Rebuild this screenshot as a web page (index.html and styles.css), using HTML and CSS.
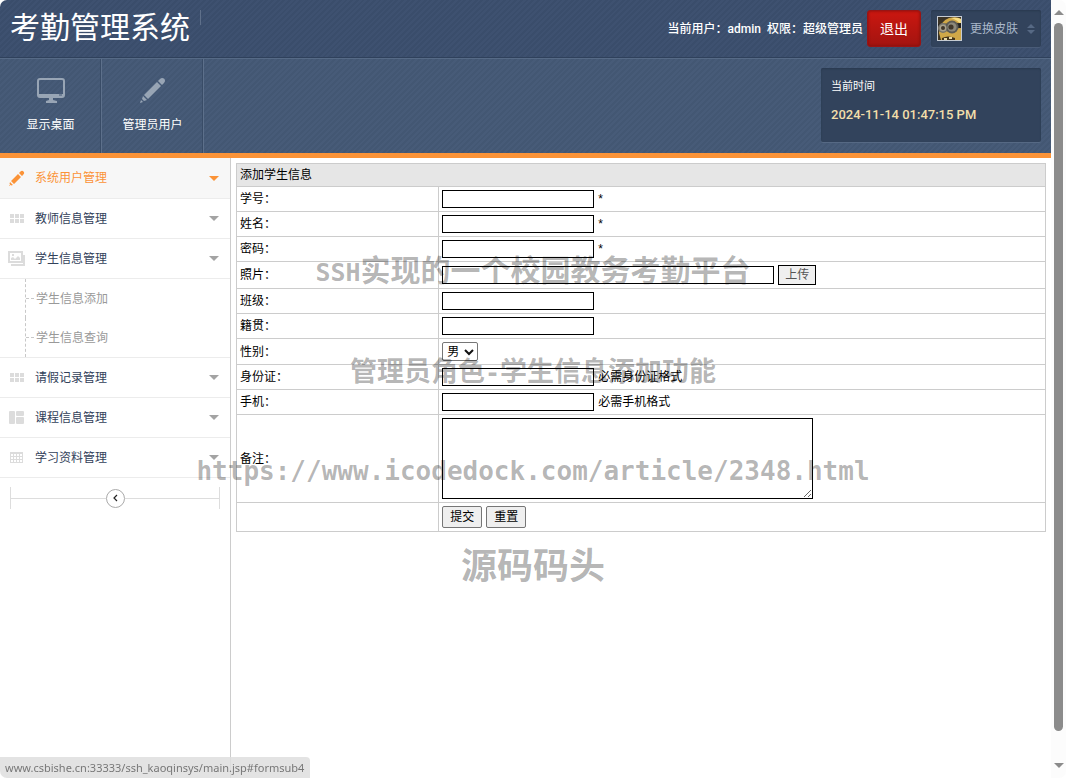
FILE: index.html
```html
<!DOCTYPE html>
<html lang="zh-CN">
<head>
<meta charset="utf-8">
<title>考勤管理系统</title>
<link rel="stylesheet" href="styles.css">
</head>
<body>
<div class="page">
  <header class="topbar">
    <h1 class="brand">考勤管理系统</h1>
    <span class="brand-rule"></span>
    <div class="user">
      <span class="user-info">当前用户：admin&nbsp; 权限：超级管理员</span>
      <button class="logout" type="button">退出</button>
      <button class="skin" type="button">
        <svg class="avatar" viewBox="0 0 25 25" width="25" height="25" aria-hidden="true">
          <rect width="25" height="25" fill="#c5cbd2"/>
          <rect x="1" y="1" width="23" height="23" fill="#3c3426"/>
          <path d="M2 17Q3 5 12 2Q20 0 24 3V24H4Z" fill="#d0a848"/>
          <path d="M14 2Q20 1 24 3V9Q21 4 14 2Z" fill="#f6dc84"/>
          <path d="M1 8L24 7V12L1 13Z" fill="#25231f"/>
          <circle cx="6" cy="12" r="5" fill="#77746b"/>
          <circle cx="15" cy="11" r="6.500" fill="#5d5b54"/>
          <circle cx="6" cy="12" r="3.500" fill="#a9a18c"/>
          <circle cx="15" cy="11" r="4.600" fill="#8d897b"/>
          <circle cx="6" cy="12" r="2" fill="#40372a"/>
          <circle cx="14" cy="11" r="2.600" fill="#40372a"/>
          <path d="M5 22Q11 19 18 22V24H5Z" fill="#43341b"/>
          <path d="M7 22h3v2H7zM12 21h3v2h-3z" fill="#e9d9a4"/>
        </svg>
        <span>更换皮肤</span>
        <svg class="sorter" viewBox="0 0 8 12" width="8" height="12" aria-hidden="true"><path d="M0 5L4 1L8 5ZM0 7H8L4 11Z" fill="#566984"/></svg>
      </button>
    </div>
  </header>

  <nav class="toolbar">
    <a class="tile" href="#desktop">
      <svg viewBox="0 0 28 28" width="28" height="28" aria-hidden="true">
        <path d="M3 2H25Q27 2 27 4V18Q27 20 25 20H3Q1 20 1 18V4Q1 2 3 2Z" fill="none" stroke="#98a5b5" stroke-width="2"/>
        <path d="M2 17H26V19H2Z" fill="#98a5b5"/><path d="M22 17.500h3v1h-3z" fill="#455975"/>
        <path d="M12 20H16V23L20 24V26H9V24L12 23Z" fill="#98a5b5"/>
      </svg>
      <span>显示桌面</span>
    </a>
    <a class="tile" href="#admins">
      <svg viewBox="0 0 28 28" width="28" height="28" aria-hidden="true">
        <g fill="#98a5b5"><path d="M18 5L22 9L9 22L5 18Z"/><path d="M19 4L21 2Q23 0 25.500 2Q27 4 25 6L23 8Z"/><path d="M4 19L8 23L5 24L3 22Z"/><path d="M2 23L4 25L1 26Z"/></g>
      </svg>
      <span>管理员用户</span>
    </a>
    <section class="clock">
      <span class="clock-label">当前时间</span>
      <time class="clock-time" datetime="2024-11-14T13:47:15">2024-11-14 01:47:15 PM</time>
    </section>
  </nav>

  <div class="content">
    <aside class="sidebar">
      <a class="menu active" href="#users">
        <svg viewBox="0 0 17 17" width="17" height="17" aria-hidden="true"><path d="M10 4L13 7L6 14L3 11ZM11 3L12 2Q14 0 15.500 1.500Q17 3 15 5L14 6ZM2 12L5 15L3 15.500L1.500 14ZM1 15L2 16H1Z"/></svg>
        <span>系统用户管理</span><i class="caret"></i>
      </a>
      <a class="menu" href="#teachers">
        <svg viewBox="0 0 17 17" width="17" height="17" aria-hidden="true"><path d="M2 4h4v4H2zM7 4h4v4H7zM12 4h4v4h-4zM2 9h4v4H2zM7 9h4v4H7zM12 9h4v4h-4z"/></svg>
        <span>教师信息管理</span><i class="caret"></i>
      </a>
      <a class="menu" href="#students">
        <svg viewBox="0 0 17 17" width="17" height="17" aria-hidden="true"><path d="M1 2h13v10H1zM16 5v10H3" fill="none" stroke="#dcdcdc" stroke-width="2"/><path d="M3 10V8L5 7L7 9L10 6L12 8V10ZM4 4h2v2H4z"/></svg>
        <span>学生信息管理</span><i class="caret"></i>
      </a>
      <div class="submenu">
        <a class="subitem" href="#formsub4">学生信息添加</a>
        <a class="subitem" href="#formsub5">学生信息查询</a>
      </div>
      <a class="menu" href="#leave">
        <svg viewBox="0 0 17 17" width="17" height="17" aria-hidden="true"><path d="M2 4h4v4H2zM7 4h4v4H7zM12 4h4v4h-4zM2 9h4v4H2zM7 9h4v4H7zM12 9h4v4h-4z"/></svg>
        <span>请假记录管理</span><i class="caret"></i>
      </a>
      <a class="menu" href="#courses">
        <svg viewBox="0 0 17 17" width="17" height="17" aria-hidden="true"><rect x="1" y="2" width="6" height="13" rx="1"/><rect x="8" y="2" width="8" height="5" rx="1"/><rect x="8" y="8" width="8" height="7" rx="1"/></svg>
        <span>课程信息管理</span><i class="caret"></i>
      </a>
      <a class="menu" href="#materials">
        <svg viewBox="0 0 17 17" width="17" height="17" aria-hidden="true"><path d="M2 3h13v11H2z"/><path d="M3 5h2v2H3zM6 5h2v2H6zM9 5h2v2H9zM12 5h2v2h-2zM3 8h2v2H3zM6 8h2v2H6zM9 8h2v2H9zM12 8h2v2h-2zM3 11h2v2H3zM6 11h2v2H6zM9 11h2v2H9zM12 11h2v2h-2z" fill="#fff"/></svg>
        <span>学习资料管理</span><i class="caret"></i>
      </a>
      <div class="collapse">
        <span class="track"></span>
        <button class="collapse-button" type="button" aria-label="收起菜单"><svg viewBox="0 0 8 10" width="8" height="10" aria-hidden="true"><path d="M6 2L3 5L6 8" fill="none" stroke="#222" stroke-width="1.200"/></svg></button>
        <span class="track"></span>
      </div>
    </aside>

    <main class="main">
      <form>
        <table class="form-table">
          <colgroup><col class="label-column"><col></colgroup>
          <thead><tr><th colspan="2">添加学生信息</th></tr></thead>
          <tbody>
            <tr><td><label for="number">学号：</label></td><td><div class="field"><input id="number" type="text"><span>*</span></div></td></tr>
            <tr><td><label for="name">姓名：</label></td><td><div class="field"><input id="name" type="text"><span>*</span></div></td></tr>
            <tr><td><label for="password">密码：</label></td><td><div class="field"><input id="password" type="password"><span>*</span></div></td></tr>
            <tr><td><label for="photo">照片：</label></td><td><div class="field"><input id="photo" class="wide" type="text"><button class="upload" type="button">上传</button></div></td></tr>
            <tr><td><label for="class">班级：</label></td><td><div class="field"><input id="class" type="text"></div></td></tr>
            <tr><td><label for="origin">籍贯：</label></td><td><div class="field"><input id="origin" type="text"></div></td></tr>
            <tr><td><label for="gender">性别：</label></td><td><div class="field"><span class="select-box"><select id="gender"><option>男</option><option>女</option></select><svg class="chevron" viewBox="0 0 10 8" width="10" height="8" aria-hidden="true"><path d="M1 2L5 6L9 2" fill="none" stroke="#111" stroke-width="2"/></svg></span></div></td></tr>
            <tr><td><label for="idcard">身份证：</label></td><td><div class="field"><input id="idcard" type="text"><span>必需身份证格式</span></div></td></tr>
            <tr><td><label for="phone">手机：</label></td><td><div class="field"><input id="phone" type="text"><span>必需手机格式</span></div></td></tr>
            <tr><td><label for="remark">备注：</label></td><td><div class="field"><textarea id="remark"></textarea></div></td></tr>
            <tr><td></td><td><div class="field"><button class="action" type="submit">提交</button><button class="action" type="reset">重置</button></div></td></tr>
          </tbody>
        </table>
      </form>
    </main>
  </div>
</div>

<div class="scrollbar" aria-hidden="true">
  <i class="scroll-up"></i><span class="thumb"></span><i class="scroll-down"></i>
</div>

<div class="watermarks">
  <p class="mark mark-title"><span class="latin">SSH</span>实现的一个校园教务考勤平台</p>
  <p class="mark mark-role">管理员角色<span class="latin">-</span>学生信息添加功能</p>
  <p class="mark mark-url">https://www.icodedock.com/article/2348.html</p>
  <p class="mark mark-source">源码码头</p>
</div>
<div class="status">www.csbishe.cn:33333/ssh_kaoqinsys/main.jsp#formsub4</div>
</body>
</html>
```
FILE: styles.css
```css
* { box-sizing: border-box; }

body {
  margin: 0;
  min-height: 100vh;
  display: flex;
  background: #fff;
  color: #000;
  font: 12px/16px "Liberation Sans", "Noto Sans CJK SC", sans-serif;
}

a { color: inherit; text-decoration: none; }
button, input, select, textarea { font: inherit; margin: 0; }

.page { flex: 1; min-width: 0; display: flex; flex-direction: column; }

.topbar {
  height: 58px;
  padding: 10px;
  display: flex;
  align-items: flex-start;
  gap: 10px;
  color: #fff;
  background: repeating-linear-gradient(135deg, #3a4d6b 0 2px, #3e5170 2px 4px);
  border-bottom: 1px solid #2f415c;
  border-top-left-radius: 7px;
}
.brand { margin: 0; font-size: 30px; line-height: 36px; font-weight: 400; }
.brand-rule { width: 1px; height: 15px; background: #5f708a; }
.user { margin-left: auto; display: flex; align-items: center; font-family: Roboto, "Noto Sans CJK SC", sans-serif; }
.user-info { font-weight: 500; white-space: nowrap; }
.logout {
  width: 54px;
  height: 37px;
  margin: 0 10px 0 4px;
  padding: 0;
  border: 1px solid #991414;
  border-radius: 3px;
  background: linear-gradient(#cb1710, #a31410);
  box-shadow: inset 0 0 3px #7d100c;
  color: #fff;
  font-size: 14px;
}
.skin {
  width: 110px;
  height: 37px;
  padding: 0 6px;
  display: flex;
  align-items: center;
  gap: 8px;
  border: 0;
  border-radius: 2px;
  background: #32435c;
  box-shadow: inset 0 1px 2px #29394f, 0 1px 0 #4a5c78;
  color: #a9b7c9;
}
.sorter { margin-left: auto; }

.toolbar {
  height: 100px;
  display: flex;
  align-items: flex-start;
  color: #fff;
  background: repeating-linear-gradient(135deg, #435773 0 2px, #475b78 2px 4px);
  border-top: 1px solid #566a86;
  border-bottom: 5px solid #fb9337;
}
.tile {
  width: 102px;
  height: 94px;
  padding-top: 18px;
  display: flex;
  flex-direction: column;
  align-items: center;
  gap: 12px;
  border-right: 1px solid #5d708b;
  box-shadow: inset -1px 0 0 #394c67;
}
.clock {
  width: 220px;
  height: 74px;
  margin: 9px 10px 0 auto;
  padding: 10px;
  display: flex;
  flex-direction: column;
  gap: 13px;
  border-radius: 2px;
  background: #32435c;
  box-shadow: inset 0 1px 2px #29394f, 0 1px 0 #566984;
}
.clock-label { font-size: 11px; }
.clock-time { color: #f2dfaa; font: 500 13px/16px Roboto, sans-serif; }

.content { flex: 1; display: flex; }
.sidebar { width: 231px; flex: none; border-right: 1px solid #ccc; }
.menu {
  height: 40px;
  padding: 0 11px 0 8px;
  display: flex;
  align-items: center;
  gap: 10px;
  border-bottom: 1px solid #ececec;
  color: #32415a;
}
.menu svg { fill: #dcdcdc; }
.menu.active { height: 41px; background: #f7f7f7; color: #fb9337; }
.menu.active svg { fill: #fb9337; }
.caret {
  margin-left: auto;
  border: 5px solid transparent;
  border-top-color: currentColor;
  border-bottom: 0;
}
.menu:not(.active) .caret { border-top-color: #a3a3a3; }
.submenu {
  padding-left: 25px;
  border-bottom: 1px solid #ececec;
  color: #999;
}
.subitem {
  height: 39px;
  display: flex;
  align-items: center;
  gap: 2px;
  border-left: 1px dashed #c8c8c8;
}
.subitem::before { content: ""; width: 8px; border-top: 1px dashed #c8c8c8; }
.collapse { margin: 9px 10px; height: 22px; display: flex; align-items: center; border: solid #ddd; border-width: 0 1px; }
.track { flex: 1; height: 1px; background: #ddd; }
.collapse-button {
  width: 19px;
  height: 19px;
  padding: 0;
  display: grid;
  place-items: center;
  border: 1px solid #aaa;
  border-radius: 50%;
  background: #fff;
}

.main { flex: 1; min-width: 0; padding: 5px; }
.form-table { width: 100%; border-collapse: collapse; table-layout: fixed; }
.label-column { width: 25%; }
.form-table th, .form-table td { padding: 3px; border: 1px solid #ccc; }
.form-table th { height: 23px; background: #e6e6e6; font-weight: 400; text-align: left; }
.field { display: flex; align-items: center; gap: 4px; line-height: 18px; }
.field input {
  width: 152px;
  height: 18px;
  padding: 1px 2px;
  border: 1px solid #000;
  background: transparent;
}
.field .wide { width: 332px; }
.upload { width: 38px; height: 20px; padding: 0; border: 1px solid #000; background: #efefef; color: #555; line-height: 16px; }
.select-box { position: relative; display: flex; }
.select-box select {
  width: 36px;
  height: 19px;
  padding: 0 4px;
  appearance: none;
  border: 1px solid #767676;
  border-radius: 2px;
  background: #fff;
  color: #000;
  line-height: 16px;
}
.chevron { position: absolute; right: 4px; top: 6px; pointer-events: none; }
.field textarea { width: 371px; height: 81px; border: 1px solid #000; background: transparent; }
.action { width: 40px; height: 22px; padding: 0; border: 1px solid #767676; border-radius: 2px; background: #efefef; color: #000; }

.scrollbar {
  width: 15px;
  flex: none;
  padding: 10px 0;
  display: flex;
  flex-direction: column;
  align-items: center;
  background: #fcfcfc;
  border-radius: 0 7px 7px 0;
}
.thumb { width: 9px; flex: 1; margin: 8px 0 32px; border-radius: 5px; background: #8b8b8b; }
.scroll-up, .scroll-down { border: 5px solid transparent; }
.scroll-up { border-top: 0; border-bottom-color: #8b8b8b; }
.scroll-down { border-bottom: 0; border-top-color: #8b8b8b; }

.watermarks { position: absolute; inset: 0; overflow: hidden; pointer-events: none; }
.mark {
  position: absolute;
  left: 0;
  right: 0;
  margin: 0;
  text-align: center;
  white-space: nowrap;
  color: rgba(0, 0, 0, 0.3);
  font-weight: 700;
  font-family: "Noto Sans CJK SC", sans-serif;
  line-height: 40px;
}
.mark-title { top: 248px; font-size: 30px; }
.mark-role { top: 350px; font-size: 27px; }
.mark-url { top: 451px; font-size: 26px; font-family: "DejaVu Sans Mono", monospace; }
.mark-source { top: 543px; font-size: 36px; }
.latin { font-family: "DejaVu Sans Mono", monospace; font-size: 25px; }

.status {
  position: fixed;
  left: 0;
  bottom: 0;
  height: 21px;
  padding: 0 6px 0 5px;
  border-radius: 0 4px 0 7px;
  background: rgba(222, 222, 222, 0.85);
  color: #777;
  font: 11px/22px "Noto Sans", sans-serif;
}
```
